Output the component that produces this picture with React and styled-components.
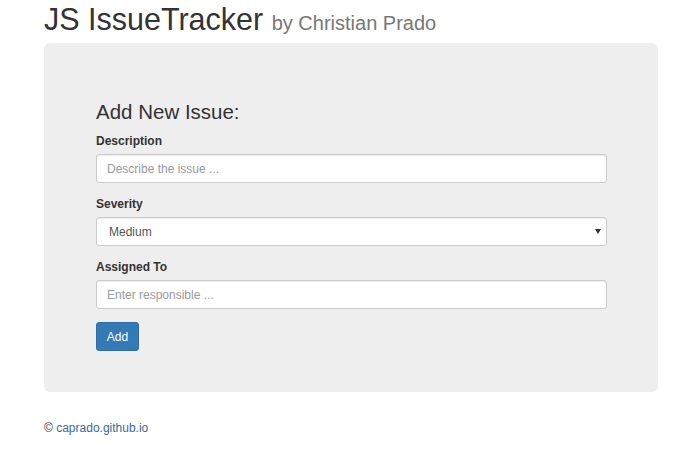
import React from 'react'
import styled, { createGlobalStyle } from 'styled-components'

const GlobalStyle = createGlobalStyle`
  * { box-sizing: border-box; }
  body {
    margin: 0;
    background: #fff;
    font-family: "Liberation Sans", Arial, Helvetica, sans-serif;
    color: #333;
  }
`

const App = () => {
  return (
    <Page>
      <GlobalStyle />
      <Title>
        JS IssueTracker <small>by Christian Prado</small>
      </Title>
      <Jumbotron>
        <FormTitle>Add New Issue:</FormTitle>
        <form onSubmit={(e) => e.preventDefault()}>
          <FormGroup>
            <Label htmlFor="desc">Description</Label>
            <Input id="desc" type="text" placeholder="Describe the issue ..." />
          </FormGroup>
          <FormGroup>
            <Label htmlFor="sev">Severity</Label>
            <SelectWrap>
              <Select id="sev" defaultValue="Medium">
                <option>Low</option>
                <option>Medium</option>
                <option>High</option>
              </Select>
            </SelectWrap>
          </FormGroup>
          <FormGroup>
            <Label htmlFor="assigned">Assigned To</Label>
            <Input id="assigned" type="text" placeholder="Enter responsible ..." />
          </FormGroup>
          <Button type="submit">Add</Button>
        </form>
      </Jumbotron>
      <Footer>
        &copy; <a href="#">caprado.github.io</a>
      </Footer>
    </Page>
  )
}

const Page = styled.div`
  width: 614px;
  margin-left: 44px;
`

const Title = styled.h1`
  margin: 3px 0 7px;
  font-size: 30.5px;
  font-weight: 400;
  line-height: 33px;
  color: #333;
  small {
    font-size: 20px;
    line-height: 1;
    color: #777;
  }
`

const Jumbotron = styled.div`
  background: #eee;
  border-radius: 6px;
  padding: 57px 51px 40px 52px;
  height: 349px;
`

const FormTitle = styled.h3`
  margin: 0 0 10px;
  font-size: 20.5px;
  font-weight: 400;
  line-height: 23px;
  color: #333;
`

const FormGroup = styled.div`
  margin-bottom: 13px;
`

const Label = styled.label`
  display: block;
  margin-bottom: 4px;
  font-size: 12px;
  font-weight: 700;
  line-height: 17px;
  color: #333;
`

const Input = styled.input`
  display: block;
  width: 100%;
  height: 29px;
  padding: 4px 10px;
  font-family: inherit;
  font-size: 12px;
  color: #555;
  background: #fff;
  border: 1px solid #ccc;
  border-radius: 3px;
  box-shadow: inset 0 1px 1px rgba(0, 0, 0, 0.075);
  outline: none;
  &::placeholder {
    color: #999;
  }
`

const SelectWrap = styled.div`
  position: relative;
  &::after {
    content: "";
    position: absolute;
    right: 6px;
    top: 12px;
    border-left: 3px solid transparent;
    border-right: 3px solid transparent;
    border-top: 5px solid #333;
    pointer-events: none;
  }
`

const Select = styled.select`
  display: block;
  width: 100%;
  height: 29px;
  padding: 4px 12px;
  font-family: inherit;
  font-size: 12px;
  color: #555;
  background: #fff;
  border: 1px solid #ccc;
  border-radius: 3px;
  box-shadow: inset 0 1px 1px rgba(0, 0, 0, 0.075);
  appearance: none;
  outline: none;
`

const Button = styled.button`
  display: block;
  margin-top: 1px;
  width: 43px;
  height: 29px;
  padding: 0;
  font-family: inherit;
  font-size: 12px;
  color: #fff;
  background: #337ab7;
  border: 1px solid #2e6da4;
  border-radius: 3px;
  cursor: pointer;
`

const Footer = styled.div`
  margin-top: 28px;
  font-size: 12px;
  line-height: 17px;
  color: #333;
  a {
    color: #3a6a98;
    text-decoration: none;
  }
`

export default App
